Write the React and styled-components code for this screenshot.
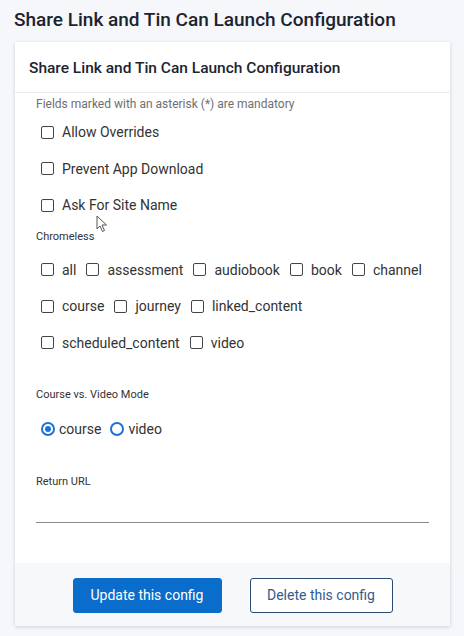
import React from "react";
import styled, { createGlobalStyle } from "styled-components";

const Global = createGlobalStyle`
  html, body { margin: 0; padding: 0; background: #f5f7fa; }
  body { font-family: Roboto, "Noto Sans", Arial, sans-serif; width: 464px; height: 636px; overflow: hidden; }
  * { box-sizing: border-box; }
`;

const Page = styled.div`
  position: relative;
  padding: 8px 0 0 0;
`;

const Title = styled.h1`
  margin: 0 0 10px 14px;
  font-size: 19px;
  line-height: 24px;
  font-weight: 500;
  color: #1c2330;
`;

const Card = styled.section`
  margin-left: 15px;
  width: 435px;
  background: #fff;
  box-shadow: 0 1px 4px rgba(0, 0, 0, 0.16);
`;

const CardHeader = styled.div`
  padding: 16px 14px 14px;
  border-bottom: 1px solid #ececec;
  font-size: 15.5px;
  line-height: 20px;
  font-weight: 500;
  color: #1c2330;
`;

const CardBody = styled.div`
  padding: 3px 21px 0 21px;
`;

const Hint = styled.div`
  font-size: 12px;
  line-height: 16px;
  color: #6f6f6f;
`;

const Stack = styled.div`
  display: flex;
  flex-direction: column;
  margin-top: ${(p) => p.$mt || 0}px;
`;

const Row = styled.div`
  display: flex;
  align-items: center;
  height: 36.5px;
  padding-left: 5px;
`;

const CheckItem = styled.label`
  display: flex;
  align-items: center;
  gap: 8px;
  margin-right: 10px;
  font-size: 14px;
  color: #333;
  line-height: 18px;
`;

const Box = styled.span`
  width: 13px;
  height: 13px;
  border: 1.6px solid #454545;
  border-radius: 2px;
  flex-shrink: 0;
`;

const SmallLabel = styled.div`
  font-size: 11px;
  line-height: 14px;
  color: #333;
  margin-top: ${(p) => p.$mt || 0}px;
`;

const RadioItem = styled.label`
  display: flex;
  align-items: center;
  gap: 4px;
  margin-right: 9px;
  font-size: 14px;
  color: #333;
`;

const RadioCircle = styled.span`
  width: 14px;
  height: 14px;
  border-radius: 50%;
  border: 2px solid #1a73d9;
  display: flex;
  align-items: center;
  justify-content: center;
  &::after {
    content: "";
    width: 6px;
    height: 6px;
    border-radius: 50%;
    background: ${(p) => (p.$checked ? "#1a73d9" : "transparent")};
  }
`;

const UrlInput = styled.div`
  height: 34px;
  border-bottom: 1px solid #8a8a8a;
  width: 393px;
`;

const Footer = styled.div`
  margin-top: 40px;
  background: #f6f8fa;
  padding: 15px 0 13px;
  display: flex;
  justify-content: center;
  gap: 28px;
`;

const Button = styled.button`
  height: 35px;
  padding: 0;
  width: ${(p) => p.$w}px;
  font-family: Roboto, Arial, sans-serif;
  font-size: 14px;
  border-radius: 3px;
  cursor: pointer;
  background: ${(p) => (p.$primary ? "#0b6dcb" : "#fff")};
  color: ${(p) => (p.$primary ? "#fff" : "#335c8c")};
  border: 1px solid ${(p) => (p.$primary ? "#0b6dcb" : "#2a4a70")};
`;

const Cursor = styled.svg`
  position: absolute;
  left: 96px;
  top: 215px;
`;

const Check = ({ label }) => (
  <CheckItem>
    <Box />
    {label}
  </CheckItem>
);

export default function App() {
  return (
    <Page>
      <Global />
      <Title>Share Link and Tin Can Launch Configuration</Title>
      <Card>
        <CardHeader>Share Link and Tin Can Launch Configuration</CardHeader>
        <CardBody>
          <Hint>Fields marked with an asterisk (*) are mandatory</Hint>
          <Stack $mt={2}>
            <Row><Check label="Allow Overrides" /></Row>
            <Row><Check label="Prevent App Download" /></Row>
            <Row><Check label="Ask For Site Name" /></Row>
          </Stack>
          <SmallLabel $mt={6}>Chromeless</SmallLabel>
          <Stack $mt={8}>
            <Row>
              <Check label="all" />
              <Check label="assessment" />
              <Check label="audiobook" />
              <Check label="book" />
              <Check label="channel" />
            </Row>
            <Row>
              <Check label="course" />
              <Check label="journey" />
              <Check label="linked_content" />
            </Row>
            <Row>
              <Check label="scheduled_content" />
              <Check label="video" />
            </Row>
          </Stack>
          <SmallLabel $mt={27}>Course vs. Video Mode</SmallLabel>
          <Stack $mt={9}>
            <Row>
              <RadioItem><RadioCircle $checked />course</RadioItem>
              <RadioItem><RadioCircle />video</RadioItem>
            </Row>
          </Stack>
          <SmallLabel $mt={27}>Return URL</SmallLabel>
          <UrlInput />
        </CardBody>
        <Footer>
          <Button $primary $w={149}>Update this config</Button>
          <Button $w={143}>Delete this config</Button>
        </Footer>
      </Card>
      <Cursor width="12" height="18" viewBox="0 0 12 18">
        <path d="M1 1 L1 14 L4 11 L6.5 16.5 L8.5 15.5 L6 10 L10.5 10 Z" fill="#fff" stroke="#555" strokeWidth="1" strokeLinejoin="round" />
      </Cursor>
    </Page>
  );
}
